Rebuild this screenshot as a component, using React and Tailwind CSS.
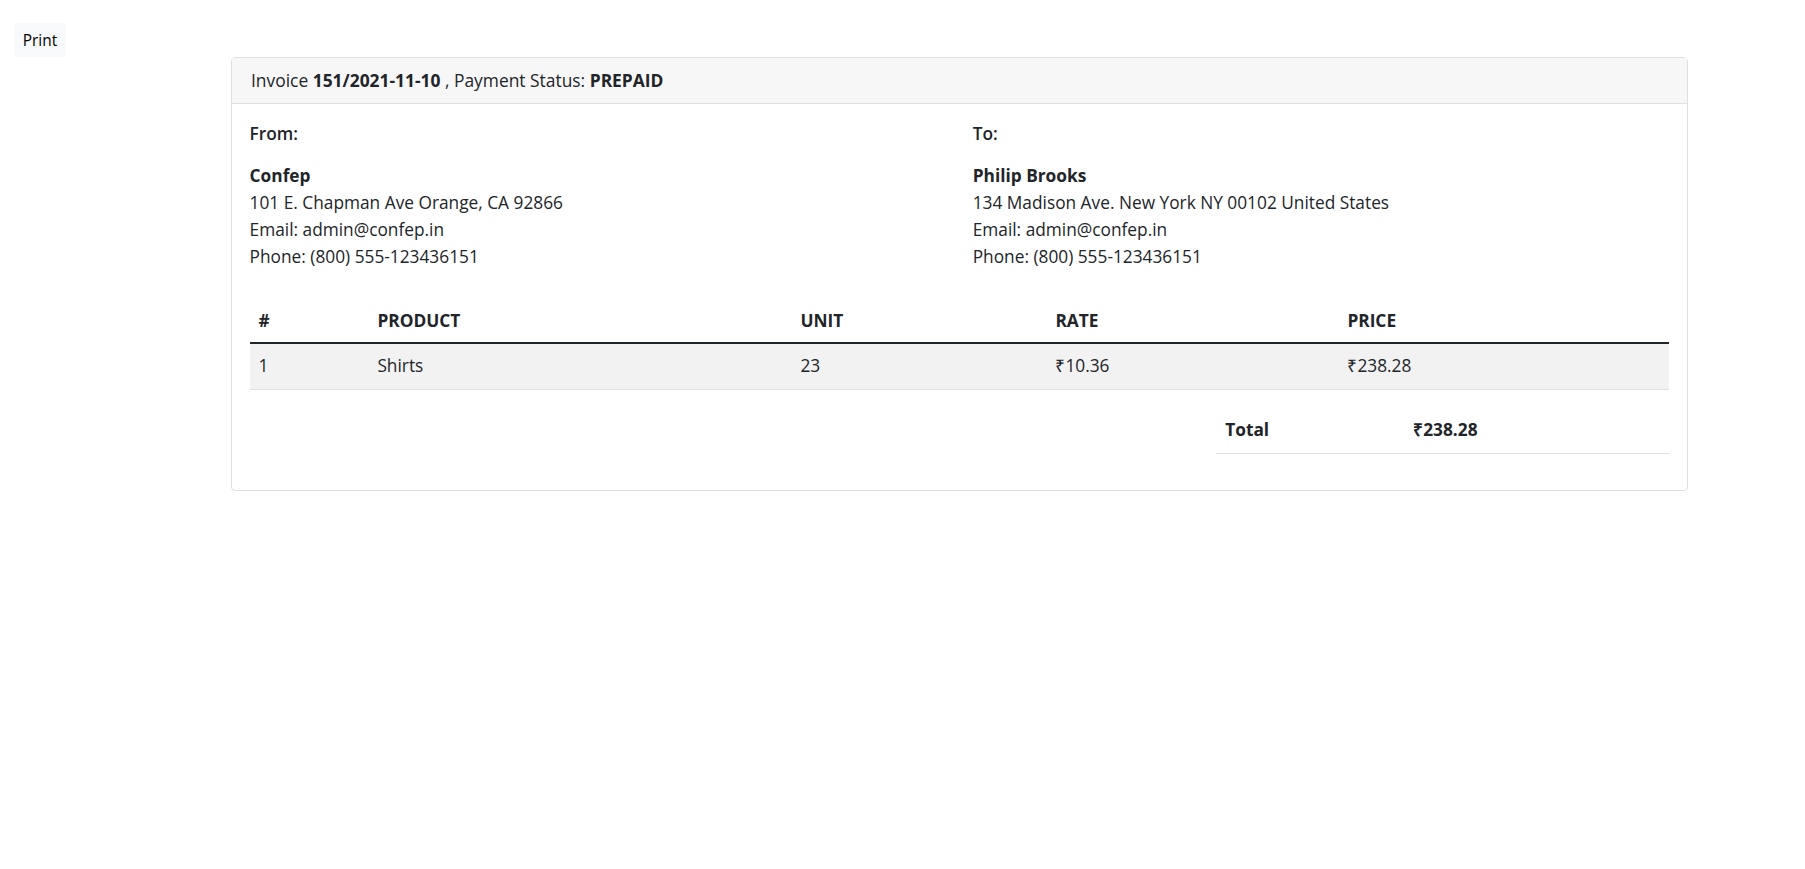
import React from 'react';

const items = [
  { id: 1, product: 'Shirts', unit: 23, rate: '₹10.36', price: '₹238.28' },
];

const App = () => {
  return (
    <div className="min-h-screen bg-white text-[#212529] font-['Open_Sans',sans-serif]">
      {/* botão de impressão */}
      <button className="ml-[14px] mt-[23px] h-[34px] w-[52px] rounded-[3.5px] bg-[#f8f9fa] pt-[1px] text-[15.4px] leading-[23px] text-black">
        Print
      </button>

      <div className="ml-[231px] w-[1457px] rounded-[4px] border border-[#dfdfdf]">
        <div className="flex h-[46px] items-center border-b border-[#dfdfdf] bg-[#f7f7f7] px-[19px] text-[17.4px]">
          <span>
            Invoice <b className="font-bold">151/2021-11-10</b> , Payment Status: <b className="font-bold">PREPAID</b>
          </span>
        </div>

        <div className="px-[17.6px] pt-[18.6px] pb-[18.6px] text-[17.3px]">
          <div className="grid grid-cols-2 gap-x-[26.4px]">
            <div>
              <h6 className="mb-[18.5px] text-[17.3px] font-semibold leading-[21px]">From:</h6>
              <div className="leading-[27px]">
                <div className="font-bold">Confep</div>
                <div>101 E. Chapman Ave Orange, CA 92866</div>
                <div>Email: admin@confep.in</div>
                <div>Phone: (800) 555-123436151</div>
              </div>
            </div>
            <div>
              <h6 className="mb-[18.5px] text-[17.3px] font-semibold leading-[21px]">To:</h6>
              <div className="leading-[27px]">
                <div className="font-bold">Philip Brooks</div>
                <div>134 Madison Ave. New York NY 00102 United States</div>
                <div>Email: admin@confep.in</div>
                <div>Phone: (800) 555-123436151</div>
              </div>
            </div>
          </div>

          <table className="mt-[29px] w-full table-fixed border-collapse">
            <thead>
              <tr className="h-[44px] border-b-2 border-[#212529] text-left font-bold">
                <th className="w-[119px] px-[8.8px]">#</th>
                <th className="w-[423px] px-[8.8px]">PRODUCT</th>
                <th className="w-[255px] px-[8.8px]">UNIT</th>
                <th className="w-[292px] px-[8.8px]">RATE</th>
                <th className="px-[8.8px]">PRICE</th>
              </tr>
            </thead>
            <tbody>
              {items.map(item => (
                <tr key={item.id} className="h-[46px] border-b border-[#dee2e6] bg-[#f2f2f2]">
                  <td className="px-[8.8px]">{item.id}</td>
                  <td className="px-[8.8px]">{item.product}</td>
                  <td className="px-[8.8px]">{item.unit}</td>
                  <td className="px-[8.8px]">{item.rate}</td>
                  <td className="px-[8.8px]">{item.price}</td>
                </tr>
              ))}
            </tbody>
          </table>

          <div className="mt-[18px] flex justify-end">
            <table className="w-[453px] table-fixed border-collapse">
              <tbody>
                <tr className="h-[46px] border-b border-[#dee2e6] font-bold">
                  <td className="w-[188px] px-[8.8px]">Total</td>
                  <td className="px-[8.8px]">₹238.28</td>
                </tr>
              </tbody>
            </table>
          </div>
          <div className="h-[17.6px]" />
        </div>
      </div>
    </div>
  );
};

export default App;
